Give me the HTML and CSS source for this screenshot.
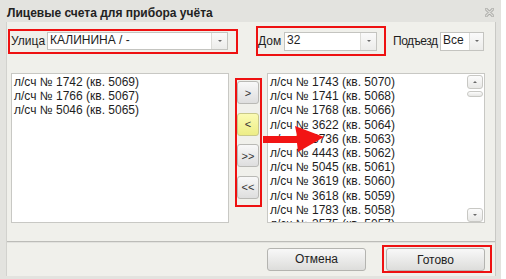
FILE: index.html
```html
<!DOCTYPE html>
<html>
<head>
<meta charset="UTF-8">
<title>Лицевые счета для прибора учёта</title>
<link rel="stylesheet" href="styles.css">
</head>
<body>
<div class="window">
    <div class="titlebar">
        <span class="title">Лицевые счета для прибора учёта</span>
        <svg class="close" width="9" height="9" viewBox="0 0 9 9">
            <path d="M1 1 L8 8 M8 1 L1 8" stroke="#a8a8a4" stroke-width="3" stroke-linecap="round"/>
            <path d="M1 1 L8 8 M8 1 L1 8" stroke="#dcdcd8" stroke-width="1.2" stroke-linecap="round"/>
        </svg>
    </div>

    <div class="panel">
        <div class="filters">
            <div class="mark field-street">
                <span class="label">Улица</span>
                <div class="combo combo-street"><span class="combo-text">КАЛИНИНА / -</span><span class="combo-btn"><i></i></span></div>
            </div>
            <div class="mark field-house">
                <span class="label">Дом</span>
                <div class="combo combo-house"><span class="combo-text">32</span><span class="combo-btn"><i></i></span></div>
            </div>
            <div class="field-entrance">
                <span class="label label-tight">Подъезд</span>
                <div class="combo combo-entrance"><span class="combo-text">Все</span><span class="combo-btn combo-btn-small"><i></i></span></div>
            </div>
        </div>

        <div class="lists">
            <div class="list">
                <div class="list-items">
                    <div class="item">л/сч № 1742 (кв. 5069)</div>
                    <div class="item">л/сч № 1766 (кв. 5067)</div>
                    <div class="item">л/сч № 5046 (кв. 5065)</div>
                </div>
            </div>

            <div class="mark moves">
                <button class="move">&gt;</button>
                <button class="move move-active">&lt;</button>
                <button class="move">&gt;&gt;</button>
                <button class="move">&lt;&lt;</button>
            </div>

            <div class="list">
                <div class="list-items">
                    <div class="item">л/сч № 1743 (кв. 5070)</div>
                    <div class="item">л/сч № 1741 (кв. 5068)</div>
                    <div class="item">л/сч № 1768 (кв. 5066)</div>
                    <div class="item">л/сч № 3622 (кв. 5064)</div>
                    <div class="item">л/сч № 3736 (кв. 5063)</div>
                    <div class="item">л/сч № 4443 (кв. 5062)</div>
                    <div class="item">л/сч № 5045 (кв. 5061)</div>
                    <div class="item">л/сч № 3619 (кв. 5060)</div>
                    <div class="item">л/сч № 3618 (кв. 5059)</div>
                    <div class="item">л/сч № 1783 (кв. 5058)</div>
                    <div class="item">л/сч № 3575 (кв. 5057)</div>
                </div>
                <div class="scrollbar">
                    <span class="sb-btn"><i class="up"></i></span>
                    <span class="sb-thumb"></span>
                    <span class="sb-space"></span>
                    <span class="sb-btn"><i></i></span>
                </div>
            </div>
        </div>

        <div class="footer">
            <button class="btn">Отмена</button>
            <div class="mark done">
                <button class="btn">Готово</button>
            </div>
        </div>
    </div>

    <!-- red pointer drawn over the right list -->
    <svg class="pointer" width="70" height="40" viewBox="0 0 70 40">
        <polygon points="0,12 34,12 32,2 61,13 35,28 34,19 0,19" fill="#f21414"/>
    </svg>
</div>
</body>
</html>
```

FILE: styles.css
```css
body {
    margin: 0;
    background-color: #FFFFFF;
    font-family: "Liberation Sans", Arial, sans-serif;
    font-size: 12px;
    color: #1e1e1e;
}

.window {
    position: relative;
    width: 501px;
    height: 279px;
    padding: 0 5px 3px 6px;
    box-sizing: border-box;
    background-color: #e3e3df;
    display: flex;
    flex-direction: column;
}

.titlebar {
    height: 22px;
    box-sizing: border-box;
    padding: 4px 2px 0 1px;
    line-height: 18px;
    display: flex;
    justify-content: space-between;
}

.title {
    font-weight: bold;
    color: #222222;
}

.close {
    margin-top: 4px;
}

.panel {
    flex: 1;
    background-color: #f0f0eb;
    border-left: 1px solid #d2d2ce;
    border-right: 1px solid #c9c9c5;
    display: flex;
    flex-direction: column;
}

.mark {
    border: 2px solid #ee1111;
    box-sizing: border-box;
}

/* filter row */

.filters {
    height: 30px;
    margin-top: 4px;
    display: flex;
    align-items: center;
}

.filters .mark,
.field-entrance {
    display: flex;
    align-items: center;
}

.label {
    line-height: 15px;
}

.label-tight {
    letter-spacing: -0.5px;
}

.field-street {
    width: 230px;
    height: 25px;
    margin-left: 1px;
    padding: 0 8px 0 1px;
}

.field-house {
    width: 130px;
    height: 30px;
    margin-left: 18px;
    padding: 0 7px 0 0;
}

.field-entrance {
    width: 91px;
    margin-left: 7px;
}

.combo {
    margin-left: auto;
    height: 18px;
    box-sizing: border-box;
    background-color: #FFFFFF;
    border: 1px solid #c4c4c0;
    display: flex;
}

.combo-street { width: 181px; }
.combo-house { width: 93px; height: 19px; }
.combo-entrance { width: 44px; height: 19px; }

.combo-text {
    flex: 1;
    padding-left: 2px;
    line-height: 15px;
    white-space: nowrap;
    overflow: hidden;
}

.combo-btn {
    width: 15px;
    border-left: 1px solid #dcdcd8;
    background: linear-gradient(#fafafa, #ececea);
    display: flex;
    align-items: center;
    justify-content: center;
}

.combo-btn-small { width: 13px; }

.combo-btn i,
.sb-btn i {
    width: 0;
    height: 0;
    border-left: 2px solid transparent;
    border-right: 2px solid transparent;
    border-top: 2px solid #6a6a6a;
}

/* lists */

.lists {
    margin-top: 17px;
    display: flex;
    align-items: flex-start;
}

.list {
    width: 218px;
    height: 150px;
    box-sizing: border-box;
    background-color: #FFFFFF;
    border: 1px solid #c8c8c4;
    display: flex;
    overflow: hidden;
}

.lists .list:first-child {
    margin-left: 4px;
}

.list-items {
    flex: 1;
    padding: 1px 0 0 2px;
    overflow: hidden;
}

.item {
    line-height: 14.2px;
    white-space: nowrap;
}

.moves {
    width: 27px;
    margin: 5px 5px 0 6px;
    padding: 1px 0 6px 0;
    display: flex;
    flex-direction: column;
    gap: 8.67px;
}

.move {
    width: 22px;
    height: 23px;
    padding: 0;
    font-family: "Liberation Sans", Arial, sans-serif;
    font-size: 11px;
    color: #333333;
    border: 1px solid #b9b9b5;
    border-radius: 3px;
    background: linear-gradient(#f8f8f8, #dedede);
}

.move-active {
    border-color: #c9c98a;
    background: linear-gradient(#fbfbb4, #eded86);
}

.scrollbar {
    width: 17px;
    padding: 1px 0 0 0;
    display: flex;
    flex-direction: column;
}

.sb-btn {
    width: 16px;
    height: 14px;
    box-sizing: border-box;
    border: 1px solid #c8c8c4;
    border-radius: 3px;
    background: linear-gradient(#fcfcfc, #e8e8e6);
    display: flex;
    align-items: center;
    justify-content: center;
}

.sb-btn i.up {
    border-top: none;
    border-bottom: 2px solid #6a6a6a;
}

.sb-thumb {
    width: 16px;
    height: 6px;
    margin-top: 2px;
    box-sizing: border-box;
    border: 1px solid #c8c8c4;
    border-radius: 3px;
    background: linear-gradient(#fcfcfc, #e6e6e4);
}

.sb-space {
    flex: 1;
}

/* footer */

.footer {
    margin-top: 18px;
    flex: 1;
    border-top: 1px solid #bcbcb8;
    box-shadow: inset 0 1px 0 #e2e2de;
    padding: 0 3px 0 0;
    display: flex;
    justify-content: flex-end;
    align-items: center;
}

.btn {
    width: 99px;
    height: 23px;
    padding: 0;
    font-family: "Liberation Sans", Arial, sans-serif;
    font-size: 12px;
    color: #222222;
    border: 1px solid #b4b4b0;
    border-radius: 3px;
    background: linear-gradient(#f8f8f8, #dddddb);
}

.done {
    margin-left: 16px;
    padding: 1px 5px 0 2px;
}

.pointer {
    position: absolute;
    left: 263px;
    top: 124px;
}
```
